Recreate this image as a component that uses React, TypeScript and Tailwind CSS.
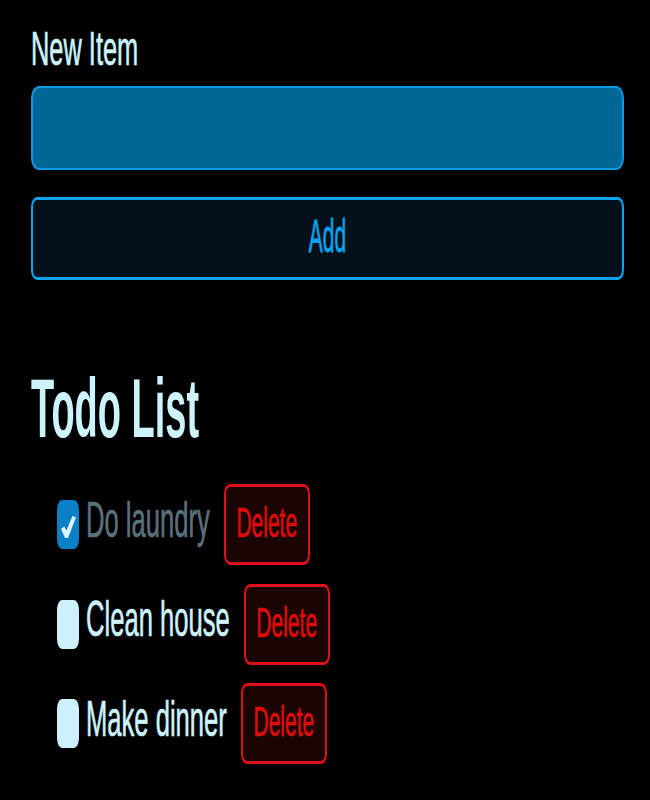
import React from "react";

type Item = { text: string; done: boolean };

const items: Item[] = [
  { text: "Do laundry", done: true },
  { text: "Clean house", done: false },
  { text: "Make dinner", done: false },
];

function Check() {
  return (
    <svg width="15" height="22" viewBox="0 0 15 22" className="mt-[5px]">
      <polygon points="0,13 3.2,10.6 5.4,14.6 11.4,0 15,1.6 7,22 4,22" fill="#dcf2ff" />
    </svg>
  );
}

export default function App() {
  return (
    <div className="min-h-[800px] w-[650px] bg-black font-['Liberation_Sans',Arial,sans-serif] text-[#cdf3fc] pl-[31px] pr-[26px] pt-[20px]">
      <div className="h-[60px] flex items-center">
        <span className="inline-block text-[25.4px] leading-none scale-y-[1.88] [-webkit-text-stroke:0.35px_currentColor]">New Item</span>
      </div>
      <div className="mt-[6px] h-[84px] rounded-[8px/12px] border-2 border-[#0b9ae0] bg-[#006696]" />
      <button className="mt-[27px] h-[83px] w-full flex items-center justify-center rounded-[6px/10px] border-x-2 border-y-[3px] border-[#0aa3ee] bg-[#04111a] text-[#0aa3f0] font-['Liberation_Sans',Arial,sans-serif]">
        <span className="inline-block text-[21px] leading-none scale-y-[2.2] -translate-y-[3px] [-webkit-text-stroke:0.35px_currentColor]">Add</span>
      </button>
      <div className="mt-[98px] h-[60px] flex items-center">
        <span className="inline-block text-[38px] font-bold leading-none scale-y-[2.2]">Todo List</span>
      </div>
      <div className="mt-[46px] flex flex-col gap-[18.5px]">
        {items.map((it) => (
          <div key={it.text} className="h-[81px] flex items-center">
            {it.done ? (
              <div className="ml-[26px] w-[22px] h-[49px] rounded-[5px/10px] bg-[#0a80c6] flex items-center justify-center">
                <Check />
              </div>
            ) : (
              <div className="ml-[26px] w-[22px] h-[49px] rounded-[5px/10px] bg-[#cdf0fd]" />
            )}
            <span
              className={
                it.done
                  ? "ml-[7px] inline-block text-[25.6px] leading-none scale-y-[1.92] -translate-y-[4px] text-[#5a717c] [-webkit-text-stroke:0.35px_currentColor]"
                  : "ml-[7px] inline-block text-[25.6px] leading-none scale-y-[1.92] -translate-y-[4px] text-[#cdf3fc] [-webkit-text-stroke:0.35px_currentColor]"
              }
            >
              {it.text}
            </span>
            <button className="ml-[14px] w-[86px] h-[81px] flex items-center justify-center rounded-[6px/10px] border-x-2 border-y-[3px] border-[#e0101a] bg-[#1a0404] text-[#e00c0c] font-['Liberation_Sans',Arial,sans-serif]">
              <span className="inline-block text-[21px] leading-none scale-y-[2.06] -translate-y-[3px] [-webkit-text-stroke:0.35px_currentColor]">Delete</span>
            </button>
          </div>
        ))}
      </div>
    </div>
  );
}
